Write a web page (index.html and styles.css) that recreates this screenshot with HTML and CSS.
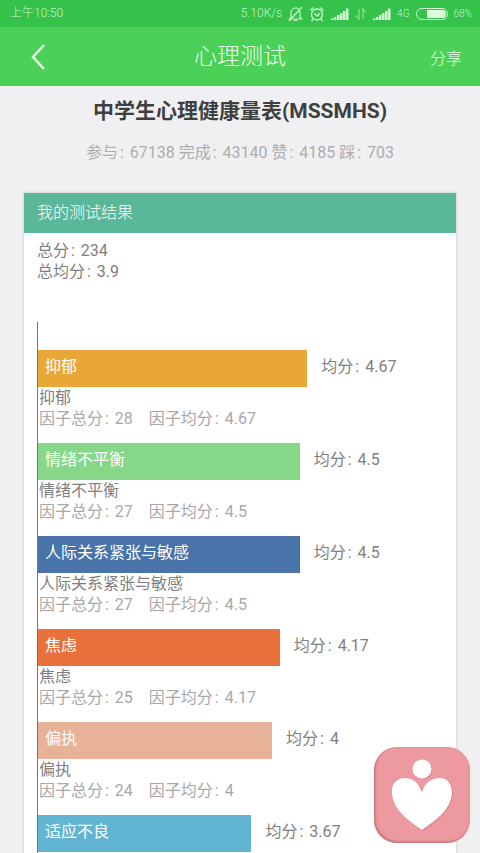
FILE: index.html
```html
<!DOCTYPE html>
<html lang="zh-CN">
<head>
  <meta charset="utf-8">
  <meta name="viewport" content="width=device-width, initial-scale=1">
  <title>心理测试</title>
  <link rel="stylesheet" href="styles.css">
</head>
<body>
  <div class="status-bar">
    <span class="time">上午10:50</span>
    <div class="status-icons">
      <span>5.10K/s</span>
      <svg width="15" height="16" viewBox="0 0 15 16" fill="none" stroke="#c9f5cc" stroke-width="1.2">
        <path d="M3 11.5V6.5a4.500 4.500 0 0 1 9 0v5l1.500 1.500H1.500L3 11.500M6 14.500h3M14 1L1 15"/>
      </svg>
      <svg width="16" height="16" viewBox="0 0 16 16" fill="none" stroke="#d4f8d6" stroke-width="1.3">
        <circle cx="8" cy="8.5" r="5.5"/>
        <path d="M5.500 7.500L8 10l3-2.500M1.500 4.500L4.500 1.500M11.500 1.500l3 3M4 13l-1.500 2M12 13l1.500 2"/>
      </svg>
      <svg width="18" height="12" viewBox="0 0 18 12" fill="#d4f8d6">
        <path d="M0 10.500h2.500V12H0zM3 9h2.500v3H3zM6 7h2.500v5H6zM9 5h2.500v7H9zM12 3h2.500v9H12zM15 .5h2.500V12H15z"/>
      </svg>
      <svg width="12" height="12" viewBox="0 0 12 12" fill="none" stroke="#7fdc88" stroke-width="1.5">
        <path d="M1 8l3 3V1M8 11V1l3 3"/>
      </svg>
      <svg width="18" height="12" viewBox="0 0 18 12" fill="#d4f8d6">
        <path d="M0 10.500h2.500V12H0zM3 9h2.500v3H3zM6 7h2.500v5H6zM9 5h2.500v7H9zM12 3h2.500v9H12zM15 .5h2.500V12H15z"/>
      </svg>
      <span class="small">4G</span>
      <svg width="32" height="12" viewBox="0 0 32 12">
        <rect x="0.5" y="0.5" width="31" height="11" rx="5.5" fill="none" stroke="#d4f8d6"/>
        <path d="M11 2h15a4 4 0 0 1 0 8H11z" fill="#dcfadd"/>
      </svg>
      <span class="small">68%</span>
    </div>
  </div>

  <header>
    <button type="button" class="back" aria-label="返回">
      <svg width="16" height="28" viewBox="0 0 16 28" fill="none" stroke="#e9fdea" stroke-width="2.5">
        <path d="M14 2L3 14l11 12"/>
      </svg>
    </button>
    <h1>心理测试</h1>
    <button type="button" class="share">分享</button>
  </header>

  <main>
    <h2>中学生心理健康量表(MSSMHS)</h2>
    <p class="meta">参与<span class="colon">:</span> 67138 完成<span class="colon">:</span> 43140 赞<span class="colon">:</span> 4185 踩<span class="colon">:</span> 703</p>

    <section class="card">
      <h3>我的测试结果</h3>
      <div class="card-body">
        <p>总分<span class="colon">:</span> 234</p>
        <p>总均分<span class="colon">:</span> 3.9</p>

        <div class="chart">
          <div class="factor">
            <div class="bar-row">
              <div class="bar orange" style="width: 66.5%">抑郁</div>
              <span>均分<span class="colon">:</span> 4.67</span>
            </div>
            <p>抑郁</p>
            <p class="detail"><span>因子总分<span class="colon">:</span> 28</span><span>因子均分<span class="colon">:</span> 4.67</span></p>
          </div>
          <div class="factor">
            <div class="bar-row">
              <div class="bar green" style="width: 64.6%">情绪不平衡</div>
              <span>均分<span class="colon">:</span> 4.5</span>
            </div>
            <p>情绪不平衡</p>
            <p class="detail"><span>因子总分<span class="colon">:</span> 27</span><span>因子均分<span class="colon">:</span> 4.5</span></p>
          </div>
          <div class="factor">
            <div class="bar-row">
              <div class="bar blue" style="width: 64.6%">人际关系紧张与敏感</div>
              <span>均分<span class="colon">:</span> 4.5</span>
            </div>
            <p>人际关系紧张与敏感</p>
            <p class="detail"><span>因子总分<span class="colon">:</span> 27</span><span>因子均分<span class="colon">:</span> 4.5</span></p>
          </div>
          <div class="factor">
            <div class="bar-row">
              <div class="bar red" style="width: 59.7%">焦虑</div>
              <span>均分<span class="colon">:</span> 4.17</span>
            </div>
            <p>焦虑</p>
            <p class="detail"><span>因子总分<span class="colon">:</span> 25</span><span>因子均分<span class="colon">:</span> 4.17</span></p>
          </div>
          <div class="factor">
            <div class="bar-row">
              <div class="bar peach" style="width: 57.8%">偏执</div>
              <span>均分<span class="colon">:</span> 4</span>
            </div>
            <p>偏执</p>
            <p class="detail"><span>因子总分<span class="colon">:</span> 24</span><span>因子均分<span class="colon">:</span> 4</span></p>
          </div>
          <div class="factor">
            <div class="bar-row">
              <div class="bar cyan" style="width: 52.7%">适应不良</div>
              <span>均分<span class="colon">:</span> 3.67</span>
            </div>
          </div>
        </div>
      </div>
    </section>
  </main>

  <button type="button" class="heart" aria-label="心理咨询">
    <svg width="96" height="96" viewBox="0 0 96 96">
      <g fill="#c9737b" opacity="0.5">
        <circle cx="49" cy="23" r="9.5"/>
        <path d="M49 46C47 36 39 32 32 32C23 32 19 39 19 47C20 64 36 75 49 84C63 74 78 64 79 47C79 38 75 32 67 32C59 32 51 37 49 46z"/>
      </g>
      <g fill="#fff">
        <circle cx="48" cy="22" r="9.5"/>
        <path d="M48 46C46 36 38 31 31 31C22 31 17 38 18 46C19 63 35 74 48 83C62 73 77 63 78 46C78 37 73 31 66 31C58 31 50 36 48 46z"/>
      </g>
    </svg>
  </button>
</body>
</html>
```

FILE: styles.css
```css
* {
  box-sizing: border-box;
}

body {
  font-family: Roboto, "Noto Sans CJK SC", sans-serif;
  font-size: 16px;
  line-height: 21px;
  margin: 0;
  height: 100vh;
  display: flex;
  flex-direction: column;
  background-color: #f0f0f2;
  color: #7f7f7f;
}

h1, h2, h3, p {
  margin: 0;
}

button {
  padding: 0;
  border: none;
  background: none;
  color: inherit;
  font-family: inherit;
  cursor: pointer;
}

svg {
  display: block;
}

.status-bar {
  display: flex;
  flex-shrink: 0;
  justify-content: space-between;
  align-items: center;
  height: 27px;
  padding: 0 8px 0 10px;
  background-color: #34c24b;
  color: #c3f3c7;
  font-size: 12px;
  font-weight: 300;
}

.status-icons {
  display: flex;
  align-items: center;
  gap: 6px;
}

.small {
  font-size: 10px;
}

header {
  display: grid;
  grid-template-columns: 1fr auto 1fr;
  flex-shrink: 0;
  align-items: center;
  height: 59px;
  padding: 0 18px;
  background-color: #4bd157;
  color: #e9fdea;
}

header h1 {
  font-size: 23px;
  font-weight: 300;
}

.back {
  justify-self: start;
  padding: 0 12px;
}

.share {
  justify-self: end;
  font-size: 16px;
  font-weight: 300;
}

main {
  flex: 1;
  min-height: 0;
  padding: 12px 24px 0;
  overflow-y: auto;
  scrollbar-width: none;
}

main h2 {
  color: #3f3f3f;
  font-size: 21px;
  line-height: 26px;
  text-align: center;
}

.meta {
  margin: 18px 0 30px;
  color: #adadad;
  text-align: center;
}

.colon {
  padding: 0 2px;
}

.card {
  background-color: #fff;
  box-shadow: 0 0 3px rgba(0, 0, 0, 0.2);
}

.card h3 {
  padding: 0 13px;
  background-color: #5ab799;
  color: #fff;
  font-size: 16px;
  font-weight: 300;
  line-height: 40px;
}

.card-body {
  padding: 7px 13px;
}

.chart {
  margin-top: 40px;
  padding-top: 28px;
  border-left: 1px solid #777;
}

.factor {
  margin-bottom: 14px;
}

.factor p {
  padding-left: 1px;
}

.bar-row {
  display: flex;
  gap: 14px;
  line-height: 33px;
}

.bar {
  height: 37px;
  padding: 0 7px;
  color: #fff;
}

.detail {
  display: flex;
  gap: 16px;
  color: #a8a8a8;
}

.orange {
  background-color: #e8a736;
}

.green {
  background-color: #86d788;
}

.blue {
  background-color: #4874aa;
}

.red {
  background-color: #e8713c;
}

.peach {
  background-color: #e8b298;
}

.cyan {
  background-color: #62b5d2;
}

/* keeps the axis running on below the last bar */
.factor:last-child {
  margin-bottom: 0;
  padding-bottom: 56px;
}

/* floating button over the page */
.heart {
  position: fixed;
  right: 10px;
  bottom: 10px;
  border-radius: 23px;
  background-color: #ec999f;
  box-shadow: inset 1px -1px 3px #b9686f;
}
```
